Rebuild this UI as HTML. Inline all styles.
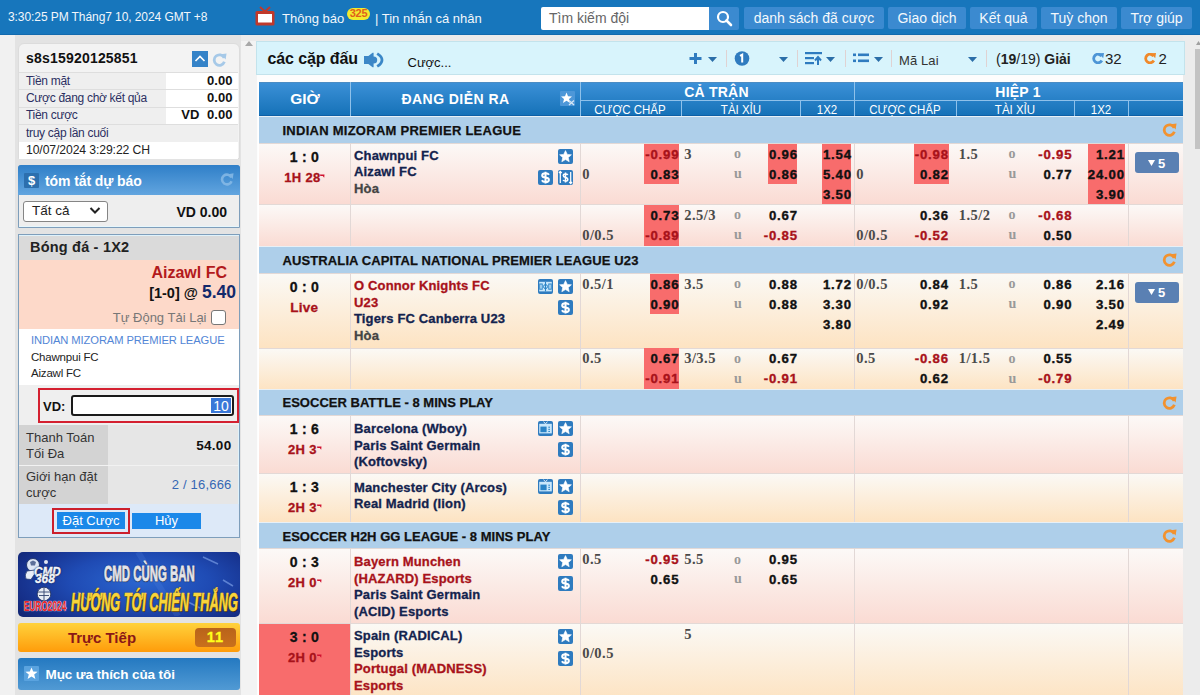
<!DOCTYPE html><html><head><meta charset="utf-8"><style>
html,body{margin:0;padding:0;width:1200px;height:695px;overflow:hidden;background:#e3e3e3;font-family:"Liberation Sans",sans-serif;}
.a{position:absolute;box-sizing:border-box;}
.t{position:absolute;white-space:nowrap;}
svg{position:absolute;}
</style></head><body>

<div class="a" style="left:0px;top:35px;width:15px;height:660px;background:#f1f1f1"></div>
<div class="a" style="left:15px;top:35px;width:226px;height:660px;background:#e3e3e3"></div>
<div class="a" style="left:241px;top:35px;width:17px;height:660px;background:#f3f3f3"></div>
<div class="a" style="left:257px;top:35px;width:936px;height:660px;background:#fdfdfd"></div>
<div class="a" style="left:241px;top:35px;width:952px;height:6px;background:#ebebeb"></div>
<div class="a" style="left:1183px;top:35px;width:17px;height:660px;background:#ececec"></div>
<div class="a" style="left:1195px;top:49px;width:5px;height:100px;background:#c3c3c3"></div>
<svg style="left:1196px;top:41px" width="5" height="4"><path d="M0 4 L2.5 0 L5 4Z" fill="#a0a0a0"/></svg>
<svg style="left:245px;top:41px" width="8" height="5"><path d="M0 5 L4 0 L8 5Z" fill="#a8a8a8"/></svg>
<div class="a" style="left:0px;top:0px;width:1200px;height:35px;background:#1776bc"></div>
<div class="a" style="left:0px;top:34px;width:1200px;height:1px;background:#126aae"></div>
<div class="t" style="top:11.14px;font-size:12px;line-height:12px;color:#f2f6fb;font-family:'Liberation Sans',sans-serif;letter-spacing:-0.08px;left:8px;">3:30:25 PM Tháng7 10, 2024 GMT +8</div>
<svg style="left:255px;top:6px" width="20" height="20" viewBox="0 0 20 20"><path d="M5 1 L10 5.5 L15 1" stroke="#c0392b" stroke-width="2" fill="none"/><rect x="0.5" y="5" width="19" height="14.5" rx="1.5" fill="#c0392b"/><rect x="3" y="8" width="14" height="8.5" fill="#fff"/></svg>
<div class="t" style="top:11.80px;font-size:13px;line-height:13px;color:#f2f6fb;font-family:'Liberation Sans',sans-serif;left:282px;">Thông báo</div>
<div class="a" style="left:347px;top:7.5px;width:23px;height:12px;background:#f2ea2e;border-radius:6px"></div>
<div class="t" style="top:8.29px;font-size:11px;line-height:11px;color:#e0601a;font-family:'Liberation Sans',sans-serif;font-weight:bold;letter-spacing:-0.3px;left:343.5px;width:30px;text-align:center;">325</div>
<div class="t" style="top:11.80px;font-size:13px;line-height:13px;color:#f2f6fb;font-family:'Liberation Sans',sans-serif;left:375px;">| Tin nhắn cá nhân</div>
<div class="a" style="left:541px;top:7px;width:168px;height:23px;background:#fff;border-radius:2px 0 0 2px"></div>
<div class="t" style="top:11.15px;font-size:14px;line-height:14px;color:#666;font-family:'Liberation Sans',sans-serif;left:549px;">Tìm kiếm đội</div>
<div class="a" style="left:709px;top:7px;width:30px;height:23px;background:#3b8ad0;border-radius:0 2px 2px 0"></div>
<svg style="left:716px;top:10px" width="17" height="17" viewBox="0 0 17 17"><circle cx="7" cy="7" r="5" stroke="#fff" stroke-width="2.2" fill="none"/><path d="M10.5 10.5 L15 15" stroke="#fff" stroke-width="2.6" stroke-linecap="round"/></svg>
<div class="a" style="left:744px;top:7px;width:140px;height:22px;background:#3b8ad0;border-radius:2px"></div>
<div class="t" style="top:11.15px;font-size:14px;line-height:14px;color:#f4f8fc;font-family:'Liberation Sans',sans-serif;left:734.0px;width:160px;text-align:center;">danh sách đã cược</div>
<div class="a" style="left:888px;top:7px;width:78px;height:22px;background:#3b8ad0;border-radius:2px"></div>
<div class="t" style="top:11.15px;font-size:14px;line-height:14px;color:#f4f8fc;font-family:'Liberation Sans',sans-serif;left:878.0px;width:98px;text-align:center;">Giao dịch</div>
<div class="a" style="left:970px;top:7px;width:67px;height:22px;background:#3b8ad0;border-radius:2px"></div>
<div class="t" style="top:11.15px;font-size:14px;line-height:14px;color:#f4f8fc;font-family:'Liberation Sans',sans-serif;left:960.0px;width:87px;text-align:center;">Kết quả</div>
<div class="a" style="left:1041px;top:7px;width:76px;height:22px;background:#3b8ad0;border-radius:2px"></div>
<div class="t" style="top:11.15px;font-size:14px;line-height:14px;color:#f4f8fc;font-family:'Liberation Sans',sans-serif;left:1031.0px;width:96px;text-align:center;">Tuỳ chọn</div>
<div class="a" style="left:1121px;top:7px;width:71px;height:22px;background:#3b8ad0;border-radius:2px"></div>
<div class="t" style="top:11.15px;font-size:14px;line-height:14px;color:#f4f8fc;font-family:'Liberation Sans',sans-serif;left:1111.0px;width:91px;text-align:center;">Trợ giúp</div>
<div class="a" style="left:18px;top:43px;width:222px;height:116px;background:#f3f3f3;border:1px solid #dcdcdc;border-radius:6px 6px 0 0"></div>
<div class="t" style="top:51.15px;font-size:14px;line-height:14px;color:#111;font-family:'Liberation Sans',sans-serif;font-weight:bold;letter-spacing:0.2px;left:26px;">s8s15920125851</div>
<div class="a" style="left:192px;top:51px;width:16px;height:16px;background:#3583c8"></div>
<svg style="left:192px;top:51px" width="16" height="16"><path d="M3.5 10 L8 5.5 L12.5 10" stroke="#fff" stroke-width="1.6" fill="none"/></svg>
<svg style="left:212px;top:52px;opacity:1" width="15" height="15" viewBox="0 0 16 16"><path d="M13 6.2 A5.6 5.6 0 1 0 13.2 10.5" stroke="#a6c9e8" stroke-width="3" fill="none"/><path d="M9.5 2.5 L15.5 1.5 L14.5 8 Z" fill="#a6c9e8"/></svg>
<div class="a" style="left:19px;top:71.5px;width:147px;height:17.5px;background:#efefef;border-top:1px solid #dedede"></div>
<div class="a" style="left:166px;top:71.5px;width:72px;height:17.5px;background:#fff;border-top:1px solid #dedede"></div>
<div class="a" style="left:19px;top:89px;width:147px;height:17.5px;background:#efefef;border-top:1px solid #dedede"></div>
<div class="a" style="left:166px;top:89px;width:72px;height:17.5px;background:#fff;border-top:1px solid #dedede"></div>
<div class="a" style="left:19px;top:106.5px;width:147px;height:17.0px;background:#efefef;border-top:1px solid #dedede"></div>
<div class="a" style="left:166px;top:106.5px;width:72px;height:17.0px;background:#fff;border-top:1px solid #dedede"></div>
<div class="a" style="left:19px;top:123.5px;width:219px;height:18px;background:#efefef;border-top:1px solid #dedede"></div>
<div class="a" style="left:19px;top:141.5px;width:219px;height:17px;background:#fff"></div>
<div class="t" style="top:75.14px;font-size:12px;line-height:12px;color:#2c2f62;font-family:'Liberation Sans',sans-serif;letter-spacing:-0.3px;left:26px;">Tiền mặt</div>
<div class="t" style="top:92.04px;font-size:12px;line-height:12px;color:#2c2f62;font-family:'Liberation Sans',sans-serif;letter-spacing:-0.3px;left:26px;">Cược đang chờ kết qủa</div>
<div class="t" style="top:109.34px;font-size:12px;line-height:12px;color:#2c2f62;font-family:'Liberation Sans',sans-serif;letter-spacing:-0.3px;left:26px;">Tiền cược</div>
<div class="t" style="top:126.54px;font-size:12px;line-height:12px;color:#2c2f62;font-family:'Liberation Sans',sans-serif;letter-spacing:-0.3px;left:26px;">truy cập lần cuối</div>
<div class="t" style="top:143.97px;font-size:12.2px;line-height:12.2px;color:#222;font-family:'Liberation Sans',sans-serif;letter-spacing:-0.1px;left:26px;">10/07/2024 3:29:22 CH</div>
<div class="t" style="top:74.20px;font-size:13px;line-height:13px;color:#111;font-family:'Liberation Sans',sans-serif;font-weight:bold;letter-spacing:0.1px;right:967.4px;text-align:right;">0.00</div>
<div class="t" style="top:91.20px;font-size:13px;line-height:13px;color:#111;font-family:'Liberation Sans',sans-serif;font-weight:bold;letter-spacing:0.1px;right:967.4px;text-align:right;">0.00</div>
<div class="t" style="top:108.40px;font-size:13px;line-height:13px;color:#111;font-family:'Liberation Sans',sans-serif;font-weight:bold;letter-spacing:0.1px;right:967.4px;text-align:right;">VD&nbsp;&nbsp;0.00</div>
<div class="a" style="left:17.5px;top:164.5px;width:222.5px;height:63.5px;background:#eeeeee;border:1px solid #7e9ebb;border-radius:3px 3px 0 0;box-shadow:inset 0 -1px 0 #e6f6fc"></div>
<div class="a" style="left:18px;top:164.5px;width:222px;height:30px;background:linear-gradient(#2f7fc8,#62a5df);border-radius:3px 3px 0 0"></div>
<div class="a" style="left:24px;top:172.5px;width:15px;height:15px;background:#2c6fae;border-radius:1px"></div>
<div class="t" style="top:174.00px;font-size:13px;line-height:13px;color:#fff;font-family:'Liberation Sans',sans-serif;font-weight:bold;left:24.0px;width:15px;text-align:center;">$</div>
<div class="t" style="top:173.65px;font-size:14px;line-height:14px;color:#fff;font-family:'Liberation Sans',sans-serif;font-weight:bold;letter-spacing:-0.1px;left:45px;">tóm tắt dự báo</div>
<svg style="left:220px;top:172px;opacity:0.8" width="14" height="14" viewBox="0 0 16 16"><path d="M13 6.2 A5.6 5.6 0 1 0 13.2 10.5" stroke="#8cbde8" stroke-width="3" fill="none"/><path d="M9.5 2.5 L15.5 1.5 L14.5 8 Z" fill="#8cbde8"/></svg>
<div class="a" style="left:23px;top:200.5px;width:85px;height:21px;background:#fff;border:1px solid #858585;border-radius:3px"></div>
<div class="t" style="top:204.07px;font-size:13.5px;line-height:13.5px;color:#222;font-family:'Liberation Sans',sans-serif;left:32px;">Tất cả</div>
<svg style="left:89px;top:206px" width="12" height="9"><path d="M1.5 2 L6 6.5 L10.5 2" stroke="#222" stroke-width="2" fill="none"/></svg>
<div class="t" style="top:205.15px;font-size:14px;line-height:14px;color:#111;font-family:'Liberation Sans',sans-serif;font-weight:bold;right:973px;text-align:right;">VD 0.00</div>
<div class="a" style="left:17.5px;top:234px;width:222.5px;height:303.5px;background:#eee;border:1px solid #7e9ebb;box-shadow:inset 1px 1px 0 #dff2fb, inset -1px -1px 0 #dff2fb"></div>
<div class="a" style="left:19px;top:235.5px;width:220px;height:24.5px;background:#dadada"></div>
<div class="t" style="top:240.23px;font-size:14.5px;line-height:14.5px;color:#222;font-family:'Liberation Sans',sans-serif;font-weight:bold;letter-spacing:0.2px;left:30px;">Bóng đá - 1X2</div>
<div class="a" style="left:19px;top:260px;width:220px;height:68.5px;background:#fdd9c9"></div>
<div class="t" style="top:265.46px;font-size:16px;line-height:16px;color:#b31a1c;font-family:'Liberation Sans',sans-serif;font-weight:bold;right:973px;text-align:right;">Aizawl FC</div>
<div class="t" style="right:964px;top:283px;font-family:'Liberation Sans',sans-serif;font-weight:bold;text-align:right;line-height:18px"><span style="font-size:14.5px;color:#111">[1-0] @ </span><span style="font-size:17.5px;color:#13296b">5.40</span></div>
<div class="t" style="top:311.00px;font-size:13px;line-height:13px;color:#777;font-family:'Liberation Sans',sans-serif;right:993.5px;text-align:right;">Tự Động Tải Lại</div>
<div class="a" style="left:211px;top:310px;width:15px;height:15px;background:#fff;border:1px solid #777;border-radius:3px"></div>
<div class="a" style="left:19px;top:328.5px;width:220px;height:56.5px;background:#fff"></div>
<div class="t" style="top:335.32px;font-size:11.2px;line-height:11.2px;color:#5286d6;font-family:'Liberation Sans',sans-serif;letter-spacing:-0.1px;left:31px;">INDIAN MIZORAM PREMIER LEAGUE</div>
<div class="t" style="top:351.77px;font-size:11.5px;line-height:11.5px;color:#222;font-family:'Liberation Sans',sans-serif;letter-spacing:-0.2px;left:31px;">Chawnpui FC</div>
<div class="t" style="top:368.27px;font-size:11.5px;line-height:11.5px;color:#222;font-family:'Liberation Sans',sans-serif;letter-spacing:-0.2px;left:31px;">Aizawl FC</div>
<div class="a" style="left:19px;top:385px;width:220px;height:40px;background:#efefef"></div>
<div class="a" style="left:37.5px;top:387.5px;width:201px;height:35px;border:2px solid #d42030"></div>
<div class="t" style="top:399.50px;font-size:13px;line-height:13px;color:#111;font-family:'Liberation Sans',sans-serif;font-weight:bold;left:43px;">VD:</div>
<div class="a" style="left:70.5px;top:395px;width:163px;height:21px;background:#fff;border:2px solid #1a1a1a;border-radius:3px"></div>
<div class="a" style="left:211px;top:398px;width:20px;height:15px;background:#3a78d8"></div>
<div class="t" style="top:399.15px;font-size:14px;line-height:14px;color:#fff;font-family:'Liberation Sans',sans-serif;left:211.0px;width:20px;text-align:center;">10</div>
<div class="a" style="left:19px;top:425px;width:89px;height:39.5px;background:#d3d3d3"></div>
<div class="a" style="left:108px;top:425px;width:130px;height:39.5px;background:#e6e6e6"></div>
<div class="a" style="left:19px;top:464.5px;width:219px;height:1.5px;background:#f2f2f2"></div>
<div class="a" style="left:19px;top:466px;width:89px;height:37.5px;background:#d3d3d3"></div>
<div class="a" style="left:108px;top:466px;width:130px;height:37.5px;background:#e6e6e6"></div>
<div class="t" style="top:431.00px;font-size:13px;line-height:13px;color:#333;font-family:'Liberation Sans',sans-serif;left:26px;">Thanh Toán</div>
<div class="t" style="top:447.00px;font-size:13px;line-height:13px;color:#333;font-family:'Liberation Sans',sans-serif;left:26px;">Tối Đa</div>
<div class="t" style="top:439.07px;font-size:13.5px;line-height:13.5px;color:#111;font-family:'Liberation Sans',sans-serif;font-weight:bold;letter-spacing:0.3px;right:968.5px;text-align:right;">54.00</div>
<div class="t" style="top:469.50px;font-size:13px;line-height:13px;color:#333;font-family:'Liberation Sans',sans-serif;left:26px;">Giới hạn đặt</div>
<div class="t" style="top:485.50px;font-size:13px;line-height:13px;color:#333;font-family:'Liberation Sans',sans-serif;left:26px;">cược</div>
<div class="t" style="top:478.00px;font-size:13px;line-height:13px;color:#3567b4;font-family:'Liberation Sans',sans-serif;letter-spacing:0.2px;right:968.5px;text-align:right;">2 / 16,666</div>
<div class="a" style="left:19px;top:503.5px;width:220px;height:33px;background:#dde9f8"></div>
<div class="a" style="left:51.5px;top:508px;width:78px;height:26px;border:2px solid #cc1f2d"></div>
<div class="a" style="left:57px;top:512px;width:68px;height:17px;background:#1b88e9"></div>
<div class="t" style="top:514.00px;font-size:13px;line-height:13px;color:#fff;font-family:'Liberation Sans',sans-serif;left:51.0px;width:80px;text-align:center;">Đặt Cược</div>
<div class="a" style="left:132px;top:512.5px;width:69px;height:16.5px;background:#1b88e9"></div>
<div class="t" style="top:514.00px;font-size:13px;line-height:13px;color:#fff;font-family:'Liberation Sans',sans-serif;left:126.5px;width:80px;text-align:center;">Hủy</div>
<div class="a" style="left:17.5px;top:552px;width:222.5px;height:64.5px;background:radial-gradient(ellipse 70% 90% at 55% 45%,#2b66d0 0%,#1f4bb4 45%,#16308a 80%,#10246e 100%);border-radius:5px;overflow:hidden"></div>
<svg style="left:17.5px;top:552px" width="222" height="64" viewBox="0 0 222 64"><path d="M120 0 L160 64" stroke="#5d8ee8" stroke-width="6" opacity=".18"/><path d="M185 5 L200 12 M170 50 L182 56 M205 28 L215 34 M60 40 L70 48" stroke="#9cc0ff" stroke-width="1.5" opacity=".5"/></svg>
<div class="t" style="left:103.5px;top:562.9px;font-size:22px;line-height:22px;font-family:'Liberation Sans',sans-serif;font-weight:bold;color:#e4e4ea;transform:scaleX(0.52);transform-origin:0 0;-webkit-text-stroke:0.8px #e4e4ea;text-shadow:0 1px 1px #223,0 0 2px #112;">CMD CÙNG BAN</div>
<div class="t" style="left:71px;top:589.3px;font-size:26px;line-height:26px;font-family:'Liberation Sans',sans-serif;font-weight:bold;color:#f8d53c;transform:scaleX(0.49);transform-origin:0 0;font-style:italic;-webkit-text-stroke:0.7px #f8d53c;text-shadow:0 0 2px #5a3a00,1px 1px 1px #3a2600;">HƯỚNG TỚI CHIẾN THẮNG</div>
<svg style="left:22px;top:556px" width="46" height="48" viewBox="0 0 46 48"><circle cx="11" cy="9" r="6.5" fill="#dfe7f5" stroke="#24386e" stroke-width="1"/><path d="M8 6 L11 4.5 L14 6 L13 9.5 L9 9.5Z" fill="#5c6f99"/><path d="M5 15 Q2 19 4 23 L9 23.5 L12 19 Q15 17 13 14Z" fill="#e9eef8" stroke="#24386e" stroke-width="0.8"/><circle cx="24" cy="6" r="2" fill="#dfe6f2"/><circle cx="22" cy="38" r="6.8" fill="#e8ecf4" stroke="#1d2d5c" stroke-width="0.8"/><path d="M16 36 H28 M17 39.5 H27 M22 31.5 V44.5" stroke="#34456f" stroke-width="0.9"/></svg>
<div class="t" style="left:34px;top:564.5px;font-size:13px;line-height:13px;font-family:'Liberation Sans',sans-serif;font-weight:bold;color:#f2f5fb;transform:scaleX(0.9);transform-origin:0 0;font-style:italic;-webkit-text-stroke:0.4px #f2f5fb;text-shadow:0 0 1px #0a1640,0 0 2px #0a1640;">CMD</div>
<div class="t" style="left:35px;top:573.4px;font-size:12.5px;line-height:12.5px;font-family:'Liberation Sans',sans-serif;font-weight:bold;color:#f2f5fb;transform:scaleX(0.95);transform-origin:0 0;font-style:italic;-webkit-text-stroke:0.4px #f2f5fb;text-shadow:0 0 1px #0a1640,0 0 2px #0a1640;">368</div>
<div class="t" style="left:23.5px;top:599.1px;font-size:14px;line-height:14px;font-family:'Liberation Sans',sans-serif;font-weight:bold;color:#e3242b;transform:scaleX(0.59);transform-origin:0 0;text-shadow:0 0 1px #fff,0 0 1.5px #fff;">EURO2024</div>
<div class="a" style="left:17.5px;top:623px;width:222.5px;height:29px;background:linear-gradient(#ffd23c,#ff9c0a);border-radius:3px"></div>
<div class="t" style="top:630.30px;font-size:15px;line-height:15px;color:#8a1717;font-family:'Liberation Sans',sans-serif;font-weight:bold;left:52.0px;width:100px;text-align:center;">Trực Tiếp</div>
<div class="a" style="left:195px;top:627.5px;width:40.5px;height:19px;background:linear-gradient(#b9631a,#c9701c);border-radius:4px"></div>
<div class="t" style="top:629.53px;font-size:14.5px;line-height:14.5px;color:#ffff1a;font-family:'Liberation Sans',sans-serif;font-weight:bold;letter-spacing:1.2px;left:195.5px;width:40px;text-align:center;-webkit-text-stroke:0.3px #ffff1a">11</div>
<div class="a" style="left:17.5px;top:658px;width:222.5px;height:31.5px;background:linear-gradient(#2479c1,#519ad4);border-radius:3px"></div>
<div class="a" style="left:24px;top:666px;width:15px;height:15px;background:#5aa3df;border-radius:1px"></div>
<svg style="left:24px;top:666px" width="15" height="15" viewBox="0 0 15 15"><path d="M7.5 1.5 L9.2 5.6 L13.6 5.8 L10.2 8.6 L11.4 12.9 L7.5 10.5 L3.6 12.9 L4.8 8.6 L1.4 5.8 L5.8 5.6Z" fill="#fff"/></svg>
<div class="t" style="top:667.57px;font-size:13.5px;line-height:13.5px;color:#fff;font-family:'Liberation Sans',sans-serif;font-weight:bold;letter-spacing:-0.1px;left:45.5px;">Mục ưa thích của tôi</div>
<div class="a" style="left:256px;top:41px;width:929px;height:34px;background:#d8f4fc;border:1px solid #c3e3ec"></div>
<div class="t" style="top:51.46px;font-size:16px;line-height:16px;color:#111;font-family:'Liberation Sans',sans-serif;font-weight:bold;letter-spacing:-0.1px;left:267.5px;">các cặp đấu</div>
<svg style="left:363px;top:52px" width="21" height="16" viewBox="0 0 21 16"><path d="M1 3.9 H5.4 L9.6 0.8 H10.6 V15.2 H9.6 L5.4 12 H1Z" fill="#3b87c7"/><circle cx="10.6" cy="8" r="3.6" fill="#3b87c7"/><path d="M14.2 1.6 Q19 4.5 19 8 Q19 11.5 14.2 14.4" stroke="#3b87c7" stroke-width="2.8" fill="none"/></svg>
<div class="t" style="top:55.50px;font-size:13px;line-height:13px;color:#111;font-family:'Liberation Sans',sans-serif;left:407.5px;">Cược...</div>
<svg style="left:688px;top:52px" width="15" height="13"><path d="M7.5 1 V12 M1.5 6.5 H13.5" stroke="#2f7bbf" stroke-width="3"/></svg>
<svg style="left:707.5px;top:56.5px" width="9" height="5"><path d="M0 0 H9 L4.5 5Z" fill="#2b6ea8"/></svg>
<div class="a" style="left:726px;top:50px;width:1.2px;height:17px;background:#e0d2d2"></div>
<svg style="left:734px;top:51px" width="16" height="15" viewBox="0 0 16 15"><circle cx="8" cy="7.5" r="7.3" fill="#2f7bbf"/><path d="M6 4.8 L8.2 3.6 V11.5" stroke="#fff" stroke-width="2" fill="none"/></svg>
<svg style="left:778.5px;top:56.5px" width="9" height="5"><path d="M0 0 H9 L4.5 5Z" fill="#2b6ea8"/></svg>
<div class="a" style="left:796.5px;top:50px;width:1.2px;height:17px;background:#e0d2d2"></div>
<svg style="left:805px;top:51px" width="18" height="15" viewBox="0 0 18 15"><rect x="0" y="1" width="17" height="2.2" fill="#2f7bbf"/><rect x="0" y="6" width="9" height="2.2" fill="#2f7bbf"/><rect x="0" y="11" width="9" height="2.2" fill="#2f7bbf"/><path d="M13 14 V6.5 M10 9.5 L13 6 L16 9.5" stroke="#2f7bbf" stroke-width="2" fill="none"/></svg>
<svg style="left:826px;top:56.5px" width="9" height="5"><path d="M0 0 H9 L4.5 5Z" fill="#2b6ea8"/></svg>
<div class="a" style="left:844.5px;top:50px;width:1.2px;height:17px;background:#e0d2d2"></div>
<svg style="left:853px;top:53px" width="16" height="11" viewBox="0 0 16 11"><rect x="0" y="0.5" width="3" height="2.6" fill="#2f7bbf"/><rect x="5" y="0.5" width="11" height="2.6" fill="#2f7bbf"/><rect x="0" y="6.5" width="3" height="2.6" fill="#2f7bbf"/><rect x="5" y="6.5" width="11" height="2.6" fill="#2f7bbf"/></svg>
<svg style="left:873.5px;top:56.5px" width="9" height="5"><path d="M0 0 H9 L4.5 5Z" fill="#2b6ea8"/></svg>
<div class="a" style="left:891px;top:50px;width:1.2px;height:17px;background:#e0d2d2"></div>
<div class="t" style="top:53.50px;font-size:13px;line-height:13px;color:#333;font-family:'Liberation Sans',sans-serif;letter-spacing:0.1px;left:899px;">Mã Lai</div>
<svg style="left:968px;top:56.5px" width="9" height="5"><path d="M0 0 H9 L4.5 5Z" fill="#2b6ea8"/></svg>
<div class="a" style="left:985.5px;top:50px;width:1.2px;height:17px;background:#e0d2d2"></div>
<div class="t" style="left:996px;top:51px;font-size:14px;line-height:16px;color:#222;font-family:'Liberation Sans',sans-serif">(<b>19</b>/19) <b>Giải</b></div>
<svg style="left:1091.5px;top:53px" width="12" height="11" viewBox="0 0 12 11"><path d="M9.6 3.2 A4.3 4.3 0 1 0 9.8 7.5" stroke="#4d95d6" stroke-width="2.8" fill="none"/><path d="M7 0.3 L12 0 L11.2 5.2Z" fill="#4d95d6"/></svg>
<div class="t" style="top:50.80px;font-size:15px;line-height:15px;color:#222;font-family:'Liberation Sans',sans-serif;left:1105px;">32</div>
<svg style="left:1143.5px;top:53px" width="12" height="11" viewBox="0 0 12 11"><path d="M9.6 3.2 A4.3 4.3 0 1 0 9.8 7.5" stroke="#f0892a" stroke-width="2.8" fill="none"/><path d="M7 0.3 L12 0 L11.2 5.2Z" fill="#f0892a"/></svg>
<div class="t" style="top:50.80px;font-size:15px;line-height:15px;color:#222;font-family:'Liberation Sans',sans-serif;left:1158.5px;">2</div>
<div class="a" style="left:258px;top:81.5px;width:925px;height:614px;background:#fff"></div>
<div class="a" style="left:259px;top:81.5px;width:923.5px;height:34.5px;background:linear-gradient(#3b90d7,#1672b8);border-top:1px solid #4a8cc4;border-bottom:1px solid #0f60a6"></div>
<div class="a" style="left:350px;top:81.5px;width:1px;height:34.5px;background:#8fc1ea"></div>
<div class="a" style="left:579.5px;top:81.5px;width:1px;height:34.5px;background:#8fc1ea"></div>
<div class="a" style="left:854px;top:81.5px;width:1px;height:34.5px;background:#8fc1ea"></div>
<div class="a" style="left:579.5px;top:99.5px;width:603px;height:1px;background:#8fc1ea"></div>
<div class="a" style="left:681px;top:99.5px;width:1px;height:16.5px;background:#8fc1ea"></div>
<div class="a" style="left:800px;top:99.5px;width:1px;height:16.5px;background:#8fc1ea"></div>
<div class="a" style="left:955.5px;top:99.5px;width:1px;height:16.5px;background:#8fc1ea"></div>
<div class="a" style="left:1074px;top:99.5px;width:1px;height:16.5px;background:#8fc1ea"></div>
<div class="a" style="left:1128px;top:99.5px;width:1px;height:16.5px;background:#8fc1ea"></div>
<div class="t" style="top:91.08px;font-size:15.5px;line-height:15.5px;color:#fff;font-family:'Liberation Sans',sans-serif;font-weight:bold;left:260.0px;width:90px;text-align:center;">GIỜ</div>
<div class="t" style="top:92.35px;font-size:14px;line-height:14px;color:#fff;font-family:'Liberation Sans',sans-serif;font-weight:bold;letter-spacing:0.45px;left:345.5px;width:220px;text-align:center;">ĐANG DIỄN RA</div>
<div class="a" style="left:560px;top:91px;width:15px;height:15px;background:#4d97d8;border-radius:1px"></div>
<svg style="left:560px;top:91px" width="15" height="15" viewBox="0 0 15 15"><path d="M6.5 1.5 L8 5.3 L12 5.5 L9 8 L10 12 L6.5 9.8 L3 12 L4 8 L1 5.5 L5 5.3Z" fill="#fff"/><path d="M9 9.5 L14 14 M14 9.5 L9 14" stroke="#d6e6f5" stroke-width="1.3"/></svg>
<div class="t" style="top:85.45px;font-size:14px;line-height:14px;color:#fff;font-family:'Liberation Sans',sans-serif;font-weight:bold;letter-spacing:0.2px;left:616.5px;width:200px;text-align:center;">CẢ TRẬN</div>
<div class="t" style="top:85.45px;font-size:14px;line-height:14px;color:#fff;font-family:'Liberation Sans',sans-serif;font-weight:bold;letter-spacing:0.2px;left:918.0px;width:200px;text-align:center;">HIỆP 1</div>
<div class="t" style="top:103.72px;font-size:12.5px;line-height:12.5px;color:#fff;font-family:'Liberation Sans',sans-serif;left:575.0px;width:110px;text-align:center;transform:scaleX(0.92)">CƯỢC CHẤP</div>
<div class="t" style="top:103.72px;font-size:12.5px;line-height:12.5px;color:#fff;font-family:'Liberation Sans',sans-serif;left:685.5px;width:110px;text-align:center;transform:scaleX(0.92)">TÀI XỈU</div>
<div class="t" style="top:103.72px;font-size:12.5px;line-height:12.5px;color:#fff;font-family:'Liberation Sans',sans-serif;left:772.0px;width:110px;text-align:center;transform:scaleX(0.92)">1X2</div>
<div class="t" style="top:103.72px;font-size:12.5px;line-height:12.5px;color:#fff;font-family:'Liberation Sans',sans-serif;left:850.0px;width:110px;text-align:center;transform:scaleX(0.92)">CƯỢC CHẤP</div>
<div class="t" style="top:103.72px;font-size:12.5px;line-height:12.5px;color:#fff;font-family:'Liberation Sans',sans-serif;left:960.0px;width:110px;text-align:center;transform:scaleX(0.92)">TÀI XỈU</div>
<div class="t" style="top:103.72px;font-size:12.5px;line-height:12.5px;color:#fff;font-family:'Liberation Sans',sans-serif;left:1046.0px;width:110px;text-align:center;transform:scaleX(0.92)">1X2</div>
<div class="a" style="left:259px;top:116px;width:923.5px;height:27px;background:#aecfea;border-top:1px solid #e8f0f6"></div>
<div class="t" style="top:124.00px;font-size:13px;line-height:13px;color:#111;font-family:'Liberation Sans',sans-serif;font-weight:bold;letter-spacing:0.26px;left:282.5px;-webkit-text-stroke:0.25px #111">INDIAN MIZORAM PREMIER LEAGUE</div>
<svg style="left:1162px;top:122.0px;opacity:1" width="15" height="15" viewBox="0 0 16 16"><path d="M13 6.2 A5.6 5.6 0 1 0 13.2 10.5" stroke="#f2922f" stroke-width="3" fill="none"/><path d="M9.5 2.5 L15.5 1.5 L14.5 8 Z" fill="#f2922f"/></svg>
<div class="a" style="left:259px;top:143px;width:923.5px;height:61px;background:linear-gradient(#fcf9f7,#fadbd3);border-top:1px solid #e3d9d6"></div>
<div class="a" style="left:350px;top:143px;width:1px;height:61px;background:#e2d8d6"></div>
<div class="a" style="left:579.5px;top:143px;width:1px;height:61px;background:#e2d8d6"></div>
<div class="a" style="left:854px;top:143px;width:1px;height:61px;background:#e2d8d6"></div>
<div class="a" style="left:1127.5px;top:143px;width:1px;height:61px;background:#e2d8d6"></div>
<div class="a" style="left:259px;top:204px;width:923.5px;height:42px;background:linear-gradient(#fcf9f7,#fadbd3);border-top:1px solid #e3d9d6"></div>
<div class="a" style="left:350px;top:204px;width:1px;height:42px;background:#e2d8d6"></div>
<div class="a" style="left:579.5px;top:204px;width:1px;height:42px;background:#e2d8d6"></div>
<div class="a" style="left:854px;top:204px;width:1px;height:42px;background:#e2d8d6"></div>
<div class="a" style="left:1127.5px;top:204px;width:1px;height:42px;background:#e2d8d6"></div>
<div class="t" style="top:150.15px;font-size:14px;line-height:14px;color:#111;font-family:'Liberation Sans',sans-serif;font-weight:bold;letter-spacing:0.3px;left:259.45px;width:90px;text-align:center;-webkit-text-stroke:0.3px #111">1 : 0</div>
<div class="t" style="top:171.30px;font-size:13px;line-height:13px;color:#a8121a;font-family:'Liberation Sans',sans-serif;font-weight:bold;letter-spacing:0.3px;left:257.45px;width:90px;text-align:center;-webkit-text-stroke:0.3px #a8121a">1H 28</div>
<svg style="left:320.4px;top:173.5px" width="5" height="4"><path d="M0 0.5 H4.5 L4.2 3.8 L2.8 2 H0.3Z" fill="#d0102e"/></svg>
<div class="t" style="top:149.00px;font-size:13px;line-height:13px;color:#13234e;font-family:'Liberation Sans',sans-serif;font-weight:bold;letter-spacing:0.15px;left:354px;-webkit-text-stroke:0.3px #13234e">Chawnpui FC</div>
<div class="t" style="top:165.30px;font-size:13px;line-height:13px;color:#13234e;font-family:'Liberation Sans',sans-serif;font-weight:bold;letter-spacing:0.15px;left:354px;-webkit-text-stroke:0.3px #13234e">Aizawl FC</div>
<div class="t" style="top:181.50px;font-size:13px;line-height:13px;color:#444;font-family:'Liberation Sans',sans-serif;font-weight:bold;letter-spacing:0.15px;left:354px;-webkit-text-stroke:0.3px #444">Hòa</div>
<svg style="left:557.5px;top:149px" width="15" height="15" viewBox="0 0 15 15"><rect width="15" height="15" rx="2" fill="#2e7bbf"/><path d="M7.5 1.6 L9.3 5.4 L13.4 5.8 L10.3 8.6 L11.2 12.7 L7.5 10.6 L3.8 12.7 L4.7 8.6 L1.6 5.8 L5.7 5.4Z" fill="#fff" stroke="#fff" stroke-width="0.6" stroke-linejoin="round"/></svg>
<svg style="left:538px;top:170px" width="15" height="15" viewBox="0 0 15 15"><rect width="15" height="15" rx="2" fill="#2e7bbf"/><path d="M11 4.8 Q10 3.3 7.5 3.3 Q4.2 3.3 4.2 5.5 Q4.2 7.3 7.5 7.6 Q10.9 8 10.9 9.9 Q10.9 12 7.5 12 Q4.8 12 3.9 10.3 M7.5 1.8 V13.4" stroke="#fff" stroke-width="2" fill="none"/></svg>
<svg style="left:557.5px;top:170px" width="15" height="15" viewBox="0 0 15 15"><rect width="15" height="15" rx="2" fill="#2e7bbf"/><path d="M9.8 5 Q9.2 3.9 7.5 3.9 Q5.3 3.9 5.3 5.6 Q5.3 7 7.5 7.4 Q9.8 7.8 9.8 9.5 Q9.8 11.1 7.5 11.1 Q5.7 11.1 5.1 10 M7.5 2.6 V12.4" stroke="#fff" stroke-width="1.5" fill="none"/><path d="M2.3 1.5 V13 M0.9 3 L2.3 1.5 L3.7 3 M12.7 2 V13.5 M11.3 12 L12.7 13.5 L14.1 12" stroke="#fff" stroke-width="1.2" fill="none"/></svg>
<div class="a" style="left:644px;top:144px;width:35px;height:40px;background:#f86c6c"></div>
<div class="a" style="left:768px;top:144px;width:29px;height:40px;background:#f86c6c"></div>
<div class="a" style="left:822px;top:144px;width:29px;height:59.5px;background:#f86c6c"></div>
<div class="t" style="top:166.66px;font-size:14.5px;line-height:14.5px;color:#4a4a4a;font-family:'Liberation Serif',serif;font-weight:bold;letter-spacing:0.45px;left:582.2px;">0</div>
<div class="t" style="top:147.83px;font-size:13.2px;line-height:13.2px;color:#a8121a;font-family:'Liberation Sans',sans-serif;font-weight:bold;letter-spacing:0.8px;right:520.7px;text-align:right;-webkit-text-stroke:0.35px #a8121a">-0.99</div>
<div class="t" style="top:167.83px;font-size:13.2px;line-height:13.2px;color:#111;font-family:'Liberation Sans',sans-serif;font-weight:bold;letter-spacing:0.8px;right:520.7px;text-align:right;-webkit-text-stroke:0.35px #111">0.83</div>
<div class="t" style="top:146.66px;font-size:14.5px;line-height:14.5px;color:#4a4a4a;font-family:'Liberation Serif',serif;font-weight:bold;letter-spacing:0.45px;left:684.2px;">3</div>
<div class="t" style="top:147.28px;font-size:14px;line-height:14px;color:#999;font-family:'Liberation Serif',serif;font-weight:bold;left:734px;">o</div>
<div class="t" style="top:167.28px;font-size:14px;line-height:14px;color:#999;font-family:'Liberation Serif',serif;font-weight:bold;left:734px;">u</div>
<div class="t" style="top:147.83px;font-size:13.2px;line-height:13.2px;color:#111;font-family:'Liberation Sans',sans-serif;font-weight:bold;letter-spacing:0.8px;right:402.20000000000005px;text-align:right;-webkit-text-stroke:0.35px #111">0.96</div>
<div class="t" style="top:167.83px;font-size:13.2px;line-height:13.2px;color:#111;font-family:'Liberation Sans',sans-serif;font-weight:bold;letter-spacing:0.8px;right:402.20000000000005px;text-align:right;-webkit-text-stroke:0.35px #111">0.86</div>
<div class="t" style="top:147.83px;font-size:13.2px;line-height:13.2px;color:#111;font-family:'Liberation Sans',sans-serif;font-weight:bold;letter-spacing:0.8px;right:348.20000000000005px;text-align:right;-webkit-text-stroke:0.35px #111">1.54</div>
<div class="t" style="top:167.83px;font-size:13.2px;line-height:13.2px;color:#111;font-family:'Liberation Sans',sans-serif;font-weight:bold;letter-spacing:0.8px;right:348.20000000000005px;text-align:right;-webkit-text-stroke:0.35px #111">5.40</div>
<div class="t" style="top:187.83px;font-size:13.2px;line-height:13.2px;color:#111;font-family:'Liberation Sans',sans-serif;font-weight:bold;letter-spacing:0.8px;right:348.20000000000005px;text-align:right;-webkit-text-stroke:0.35px #111">3.50</div>
<div class="a" style="left:913.5px;top:144px;width:35.0px;height:40px;background:#f86c6c"></div>
<div class="a" style="left:1088px;top:144px;width:36.5px;height:59.5px;background:#f86c6c"></div>
<div class="t" style="top:166.66px;font-size:14.5px;line-height:14.5px;color:#4a4a4a;font-family:'Liberation Serif',serif;font-weight:bold;letter-spacing:0.45px;left:856.2px;">0</div>
<div class="t" style="top:147.83px;font-size:13.2px;line-height:13.2px;color:#a8121a;font-family:'Liberation Sans',sans-serif;font-weight:bold;letter-spacing:0.8px;right:251.20000000000005px;text-align:right;-webkit-text-stroke:0.35px #a8121a">-0.98</div>
<div class="t" style="top:167.83px;font-size:13.2px;line-height:13.2px;color:#111;font-family:'Liberation Sans',sans-serif;font-weight:bold;letter-spacing:0.8px;right:251.20000000000005px;text-align:right;-webkit-text-stroke:0.35px #111">0.82</div>
<div class="t" style="top:146.66px;font-size:14.5px;line-height:14.5px;color:#4a4a4a;font-family:'Liberation Serif',serif;font-weight:bold;letter-spacing:0.45px;left:958.7px;">1.5</div>
<div class="t" style="top:147.28px;font-size:14px;line-height:14px;color:#999;font-family:'Liberation Serif',serif;font-weight:bold;left:1008.5px;">o</div>
<div class="t" style="top:167.28px;font-size:14px;line-height:14px;color:#999;font-family:'Liberation Serif',serif;font-weight:bold;left:1008.5px;">u</div>
<div class="t" style="top:147.83px;font-size:13.2px;line-height:13.2px;color:#a8121a;font-family:'Liberation Sans',sans-serif;font-weight:bold;letter-spacing:0.8px;right:127.70000000000005px;text-align:right;-webkit-text-stroke:0.35px #a8121a">-0.95</div>
<div class="t" style="top:167.83px;font-size:13.2px;line-height:13.2px;color:#111;font-family:'Liberation Sans',sans-serif;font-weight:bold;letter-spacing:0.8px;right:127.70000000000005px;text-align:right;-webkit-text-stroke:0.35px #111">0.77</div>
<div class="t" style="top:147.83px;font-size:13.2px;line-height:13.2px;color:#111;font-family:'Liberation Sans',sans-serif;font-weight:bold;letter-spacing:0.8px;right:75.20000000000005px;text-align:right;-webkit-text-stroke:0.35px #111">1.21</div>
<div class="t" style="top:167.83px;font-size:13.2px;line-height:13.2px;color:#111;font-family:'Liberation Sans',sans-serif;font-weight:bold;letter-spacing:0.8px;right:75.20000000000005px;text-align:right;-webkit-text-stroke:0.35px #111">24.00</div>
<div class="t" style="top:187.83px;font-size:13.2px;line-height:13.2px;color:#111;font-family:'Liberation Sans',sans-serif;font-weight:bold;letter-spacing:0.8px;right:75.20000000000005px;text-align:right;-webkit-text-stroke:0.35px #111">3.90</div>
<div class="a" style="left:1134.5px;top:152px;width:44px;height:21px;background:#5a80b3;border-radius:3px"></div>
<svg style="left:1147.5px;top:159.5px" width="7" height="6"><path d="M0 0 H7 L3.5 6Z" fill="#fff"/></svg>
<div class="t" style="top:156.50px;font-size:13px;line-height:13px;color:#fff;font-family:'Liberation Sans',sans-serif;font-weight:bold;left:1158px;">5</div>
<div class="a" style="left:644px;top:205px;width:35px;height:40.5px;background:#f86c6c"></div>
<div class="t" style="top:227.66px;font-size:14.5px;line-height:14.5px;color:#4a4a4a;font-family:'Liberation Serif',serif;font-weight:bold;letter-spacing:0.45px;left:582.2px;">0/0.5</div>
<div class="t" style="top:208.83px;font-size:13.2px;line-height:13.2px;color:#111;font-family:'Liberation Sans',sans-serif;font-weight:bold;letter-spacing:0.8px;right:520.7px;text-align:right;-webkit-text-stroke:0.35px #111">0.73</div>
<div class="t" style="top:228.83px;font-size:13.2px;line-height:13.2px;color:#a8121a;font-family:'Liberation Sans',sans-serif;font-weight:bold;letter-spacing:0.8px;right:520.7px;text-align:right;-webkit-text-stroke:0.35px #a8121a">-0.89</div>
<div class="t" style="top:207.66px;font-size:14.5px;line-height:14.5px;color:#4a4a4a;font-family:'Liberation Serif',serif;font-weight:bold;letter-spacing:0.45px;left:684.2px;">2.5/3</div>
<div class="t" style="top:208.28px;font-size:14px;line-height:14px;color:#999;font-family:'Liberation Serif',serif;font-weight:bold;left:734px;">o</div>
<div class="t" style="top:228.28px;font-size:14px;line-height:14px;color:#999;font-family:'Liberation Serif',serif;font-weight:bold;left:734px;">u</div>
<div class="t" style="top:208.83px;font-size:13.2px;line-height:13.2px;color:#111;font-family:'Liberation Sans',sans-serif;font-weight:bold;letter-spacing:0.8px;right:402.20000000000005px;text-align:right;-webkit-text-stroke:0.35px #111">0.67</div>
<div class="t" style="top:228.83px;font-size:13.2px;line-height:13.2px;color:#a8121a;font-family:'Liberation Sans',sans-serif;font-weight:bold;letter-spacing:0.8px;right:402.20000000000005px;text-align:right;-webkit-text-stroke:0.35px #a8121a">-0.85</div>
<div class="t" style="top:227.66px;font-size:14.5px;line-height:14.5px;color:#4a4a4a;font-family:'Liberation Serif',serif;font-weight:bold;letter-spacing:0.45px;left:856.2px;">0/0.5</div>
<div class="t" style="top:208.83px;font-size:13.2px;line-height:13.2px;color:#111;font-family:'Liberation Sans',sans-serif;font-weight:bold;letter-spacing:0.8px;right:251.20000000000005px;text-align:right;-webkit-text-stroke:0.35px #111">0.36</div>
<div class="t" style="top:228.83px;font-size:13.2px;line-height:13.2px;color:#a8121a;font-family:'Liberation Sans',sans-serif;font-weight:bold;letter-spacing:0.8px;right:251.20000000000005px;text-align:right;-webkit-text-stroke:0.35px #a8121a">-0.52</div>
<div class="t" style="top:207.66px;font-size:14.5px;line-height:14.5px;color:#4a4a4a;font-family:'Liberation Serif',serif;font-weight:bold;letter-spacing:0.45px;left:958.7px;">1.5/2</div>
<div class="t" style="top:208.28px;font-size:14px;line-height:14px;color:#999;font-family:'Liberation Serif',serif;font-weight:bold;left:1008.5px;">o</div>
<div class="t" style="top:228.28px;font-size:14px;line-height:14px;color:#999;font-family:'Liberation Serif',serif;font-weight:bold;left:1008.5px;">u</div>
<div class="t" style="top:208.83px;font-size:13.2px;line-height:13.2px;color:#a8121a;font-family:'Liberation Sans',sans-serif;font-weight:bold;letter-spacing:0.8px;right:127.70000000000005px;text-align:right;-webkit-text-stroke:0.35px #a8121a">-0.68</div>
<div class="t" style="top:228.83px;font-size:13.2px;line-height:13.2px;color:#111;font-family:'Liberation Sans',sans-serif;font-weight:bold;letter-spacing:0.8px;right:127.70000000000005px;text-align:right;-webkit-text-stroke:0.35px #111">0.50</div>
<div class="a" style="left:259px;top:246px;width:923.5px;height:27px;background:#aecfea;border-top:1px solid #e8f0f6"></div>
<div class="t" style="top:254.00px;font-size:13px;line-height:13px;color:#111;font-family:'Liberation Sans',sans-serif;font-weight:bold;letter-spacing:0.11px;left:282.5px;-webkit-text-stroke:0.25px #111">AUSTRALIA CAPITAL NATIONAL PREMIER LEAGUE U23</div>
<svg style="left:1162px;top:252.0px;opacity:1" width="15" height="15" viewBox="0 0 16 16"><path d="M13 6.2 A5.6 5.6 0 1 0 13.2 10.5" stroke="#f2922f" stroke-width="3" fill="none"/><path d="M9.5 2.5 L15.5 1.5 L14.5 8 Z" fill="#f2922f"/></svg>
<div class="a" style="left:259px;top:273px;width:923.5px;height:74.5px;background:linear-gradient(#fbf9f5,#fde3c2);border-top:1px solid #e3d9d6"></div>
<div class="a" style="left:350px;top:273px;width:1px;height:74.5px;background:#e2d8d6"></div>
<div class="a" style="left:579.5px;top:273px;width:1px;height:74.5px;background:#e2d8d6"></div>
<div class="a" style="left:854px;top:273px;width:1px;height:74.5px;background:#e2d8d6"></div>
<div class="a" style="left:1127.5px;top:273px;width:1px;height:74.5px;background:#e2d8d6"></div>
<div class="a" style="left:259px;top:347.5px;width:923.5px;height:42.0px;background:linear-gradient(#fbf9f5,#fde3c2);border-top:1px solid #e3d9d6"></div>
<div class="a" style="left:350px;top:347.5px;width:1px;height:42.0px;background:#e2d8d6"></div>
<div class="a" style="left:579.5px;top:347.5px;width:1px;height:42.0px;background:#e2d8d6"></div>
<div class="a" style="left:854px;top:347.5px;width:1px;height:42.0px;background:#e2d8d6"></div>
<div class="a" style="left:1127.5px;top:347.5px;width:1px;height:42.0px;background:#e2d8d6"></div>
<div class="t" style="top:280.15px;font-size:14px;line-height:14px;color:#111;font-family:'Liberation Sans',sans-serif;font-weight:bold;letter-spacing:0.3px;left:259.45px;width:90px;text-align:center;-webkit-text-stroke:0.3px #111">0 : 0</div>
<div class="t" style="top:300.87px;font-size:13.5px;line-height:13.5px;color:#a8121a;font-family:'Liberation Sans',sans-serif;font-weight:bold;letter-spacing:0.3px;left:259.3px;width:90px;text-align:center;-webkit-text-stroke:0.3px #a8121a">Live</div>
<div class="t" style="top:279.30px;font-size:13px;line-height:13px;color:#a8121a;font-family:'Liberation Sans',sans-serif;font-weight:bold;letter-spacing:0.15px;left:354px;-webkit-text-stroke:0.3px #a8121a">O Connor Knights FC</div>
<div class="t" style="top:295.80px;font-size:13px;line-height:13px;color:#a8121a;font-family:'Liberation Sans',sans-serif;font-weight:bold;letter-spacing:0.15px;left:354px;-webkit-text-stroke:0.3px #a8121a">U23</div>
<div class="t" style="top:312.30px;font-size:13px;line-height:13px;color:#13234e;font-family:'Liberation Sans',sans-serif;font-weight:bold;letter-spacing:0.15px;left:354px;-webkit-text-stroke:0.3px #13234e">Tigers FC Canberra U23</div>
<div class="t" style="top:328.80px;font-size:13px;line-height:13px;color:#444;font-family:'Liberation Sans',sans-serif;font-weight:bold;letter-spacing:0.15px;left:354px;-webkit-text-stroke:0.3px #444">Hòa</div>
<svg style="left:538px;top:278.5px" width="15" height="15" viewBox="0 0 15 15"><rect width="15" height="15" rx="2" fill="#2e7bbf"/><rect x="1.2" y="2.8" width="12.6" height="9.6" fill="#c9e7fb"/><path d="M7.5 2.8 V12.4" stroke="#2a83c6" stroke-width="1.1"/><circle cx="7.5" cy="7.6" r="2" fill="none" stroke="#2a83c6" stroke-width="1"/><rect x="1.8" y="5" width="2.4" height="5.2" fill="none" stroke="#2a83c6" stroke-width="1"/><rect x="10.8" y="5" width="2.4" height="5.2" fill="none" stroke="#2a83c6" stroke-width="1"/></svg>
<svg style="left:557.5px;top:278.5px" width="15" height="15" viewBox="0 0 15 15"><rect width="15" height="15" rx="2" fill="#2e7bbf"/><path d="M7.5 1.6 L9.3 5.4 L13.4 5.8 L10.3 8.6 L11.2 12.7 L7.5 10.6 L3.8 12.7 L4.7 8.6 L1.6 5.8 L5.7 5.4Z" fill="#fff" stroke="#fff" stroke-width="0.6" stroke-linejoin="round"/></svg>
<svg style="left:557.5px;top:299.5px" width="15" height="15" viewBox="0 0 15 15"><rect width="15" height="15" rx="2" fill="#2e7bbf"/><path d="M11 4.8 Q10 3.3 7.5 3.3 Q4.2 3.3 4.2 5.5 Q4.2 7.3 7.5 7.6 Q10.9 8 10.9 9.9 Q10.9 12 7.5 12 Q4.8 12 3.9 10.3 M7.5 1.8 V13.4" stroke="#fff" stroke-width="2" fill="none"/></svg>
<div class="a" style="left:649.5px;top:274px;width:29.5px;height:39.5px;background:#f86c6c"></div>
<div class="t" style="top:276.66px;font-size:14.5px;line-height:14.5px;color:#4a4a4a;font-family:'Liberation Serif',serif;font-weight:bold;letter-spacing:0.45px;left:582.2px;">0.5/1</div>
<div class="t" style="top:277.83px;font-size:13.2px;line-height:13.2px;color:#111;font-family:'Liberation Sans',sans-serif;font-weight:bold;letter-spacing:0.8px;right:520.7px;text-align:right;-webkit-text-stroke:0.35px #111">0.86</div>
<div class="t" style="top:297.83px;font-size:13.2px;line-height:13.2px;color:#111;font-family:'Liberation Sans',sans-serif;font-weight:bold;letter-spacing:0.8px;right:520.7px;text-align:right;-webkit-text-stroke:0.35px #111">0.90</div>
<div class="t" style="top:276.66px;font-size:14.5px;line-height:14.5px;color:#4a4a4a;font-family:'Liberation Serif',serif;font-weight:bold;letter-spacing:0.45px;left:684.2px;">3.5</div>
<div class="t" style="top:277.27px;font-size:14px;line-height:14px;color:#999;font-family:'Liberation Serif',serif;font-weight:bold;left:734px;">o</div>
<div class="t" style="top:297.27px;font-size:14px;line-height:14px;color:#999;font-family:'Liberation Serif',serif;font-weight:bold;left:734px;">u</div>
<div class="t" style="top:277.83px;font-size:13.2px;line-height:13.2px;color:#111;font-family:'Liberation Sans',sans-serif;font-weight:bold;letter-spacing:0.8px;right:402.20000000000005px;text-align:right;-webkit-text-stroke:0.35px #111">0.88</div>
<div class="t" style="top:297.83px;font-size:13.2px;line-height:13.2px;color:#111;font-family:'Liberation Sans',sans-serif;font-weight:bold;letter-spacing:0.8px;right:402.20000000000005px;text-align:right;-webkit-text-stroke:0.35px #111">0.88</div>
<div class="t" style="top:277.83px;font-size:13.2px;line-height:13.2px;color:#111;font-family:'Liberation Sans',sans-serif;font-weight:bold;letter-spacing:0.8px;right:348.20000000000005px;text-align:right;-webkit-text-stroke:0.35px #111">1.72</div>
<div class="t" style="top:297.83px;font-size:13.2px;line-height:13.2px;color:#111;font-family:'Liberation Sans',sans-serif;font-weight:bold;letter-spacing:0.8px;right:348.20000000000005px;text-align:right;-webkit-text-stroke:0.35px #111">3.30</div>
<div class="t" style="top:317.83px;font-size:13.2px;line-height:13.2px;color:#111;font-family:'Liberation Sans',sans-serif;font-weight:bold;letter-spacing:0.8px;right:348.20000000000005px;text-align:right;-webkit-text-stroke:0.35px #111">3.80</div>
<div class="t" style="top:276.66px;font-size:14.5px;line-height:14.5px;color:#4a4a4a;font-family:'Liberation Serif',serif;font-weight:bold;letter-spacing:0.45px;left:856.2px;">0/0.5</div>
<div class="t" style="top:277.83px;font-size:13.2px;line-height:13.2px;color:#111;font-family:'Liberation Sans',sans-serif;font-weight:bold;letter-spacing:0.8px;right:251.20000000000005px;text-align:right;-webkit-text-stroke:0.35px #111">0.84</div>
<div class="t" style="top:297.83px;font-size:13.2px;line-height:13.2px;color:#111;font-family:'Liberation Sans',sans-serif;font-weight:bold;letter-spacing:0.8px;right:251.20000000000005px;text-align:right;-webkit-text-stroke:0.35px #111">0.92</div>
<div class="t" style="top:276.66px;font-size:14.5px;line-height:14.5px;color:#4a4a4a;font-family:'Liberation Serif',serif;font-weight:bold;letter-spacing:0.45px;left:958.7px;">1.5</div>
<div class="t" style="top:277.27px;font-size:14px;line-height:14px;color:#999;font-family:'Liberation Serif',serif;font-weight:bold;left:1008.5px;">o</div>
<div class="t" style="top:297.27px;font-size:14px;line-height:14px;color:#999;font-family:'Liberation Serif',serif;font-weight:bold;left:1008.5px;">u</div>
<div class="t" style="top:277.83px;font-size:13.2px;line-height:13.2px;color:#111;font-family:'Liberation Sans',sans-serif;font-weight:bold;letter-spacing:0.8px;right:127.70000000000005px;text-align:right;-webkit-text-stroke:0.35px #111">0.86</div>
<div class="t" style="top:297.83px;font-size:13.2px;line-height:13.2px;color:#111;font-family:'Liberation Sans',sans-serif;font-weight:bold;letter-spacing:0.8px;right:127.70000000000005px;text-align:right;-webkit-text-stroke:0.35px #111">0.90</div>
<div class="t" style="top:277.83px;font-size:13.2px;line-height:13.2px;color:#111;font-family:'Liberation Sans',sans-serif;font-weight:bold;letter-spacing:0.8px;right:75.20000000000005px;text-align:right;-webkit-text-stroke:0.35px #111">2.16</div>
<div class="t" style="top:297.83px;font-size:13.2px;line-height:13.2px;color:#111;font-family:'Liberation Sans',sans-serif;font-weight:bold;letter-spacing:0.8px;right:75.20000000000005px;text-align:right;-webkit-text-stroke:0.35px #111">3.50</div>
<div class="t" style="top:317.83px;font-size:13.2px;line-height:13.2px;color:#111;font-family:'Liberation Sans',sans-serif;font-weight:bold;letter-spacing:0.8px;right:75.20000000000005px;text-align:right;-webkit-text-stroke:0.35px #111">2.49</div>
<div class="a" style="left:1134.5px;top:281.5px;width:44px;height:21px;background:#5a80b3;border-radius:3px"></div>
<svg style="left:1147.5px;top:289.0px" width="7" height="6"><path d="M0 0 H7 L3.5 6Z" fill="#fff"/></svg>
<div class="t" style="top:286.00px;font-size:13px;line-height:13px;color:#fff;font-family:'Liberation Sans',sans-serif;font-weight:bold;left:1158px;">5</div>
<div class="a" style="left:644px;top:348px;width:35px;height:40.5px;background:#f86c6c"></div>
<div class="t" style="top:351.16px;font-size:14.5px;line-height:14.5px;color:#4a4a4a;font-family:'Liberation Serif',serif;font-weight:bold;letter-spacing:0.45px;left:582.2px;">0.5</div>
<div class="t" style="top:352.33px;font-size:13.2px;line-height:13.2px;color:#111;font-family:'Liberation Sans',sans-serif;font-weight:bold;letter-spacing:0.8px;right:520.7px;text-align:right;-webkit-text-stroke:0.35px #111">0.67</div>
<div class="t" style="top:372.33px;font-size:13.2px;line-height:13.2px;color:#a8121a;font-family:'Liberation Sans',sans-serif;font-weight:bold;letter-spacing:0.8px;right:520.7px;text-align:right;-webkit-text-stroke:0.35px #a8121a">-0.91</div>
<div class="t" style="top:351.16px;font-size:14.5px;line-height:14.5px;color:#4a4a4a;font-family:'Liberation Serif',serif;font-weight:bold;letter-spacing:0.45px;left:684.2px;">3/3.5</div>
<div class="t" style="top:351.77px;font-size:14px;line-height:14px;color:#999;font-family:'Liberation Serif',serif;font-weight:bold;left:734px;">o</div>
<div class="t" style="top:371.77px;font-size:14px;line-height:14px;color:#999;font-family:'Liberation Serif',serif;font-weight:bold;left:734px;">u</div>
<div class="t" style="top:352.33px;font-size:13.2px;line-height:13.2px;color:#111;font-family:'Liberation Sans',sans-serif;font-weight:bold;letter-spacing:0.8px;right:402.20000000000005px;text-align:right;-webkit-text-stroke:0.35px #111">0.67</div>
<div class="t" style="top:372.33px;font-size:13.2px;line-height:13.2px;color:#a8121a;font-family:'Liberation Sans',sans-serif;font-weight:bold;letter-spacing:0.8px;right:402.20000000000005px;text-align:right;-webkit-text-stroke:0.35px #a8121a">-0.91</div>
<div class="t" style="top:351.16px;font-size:14.5px;line-height:14.5px;color:#4a4a4a;font-family:'Liberation Serif',serif;font-weight:bold;letter-spacing:0.45px;left:856.2px;">0.5</div>
<div class="t" style="top:352.33px;font-size:13.2px;line-height:13.2px;color:#a8121a;font-family:'Liberation Sans',sans-serif;font-weight:bold;letter-spacing:0.8px;right:251.20000000000005px;text-align:right;-webkit-text-stroke:0.35px #a8121a">-0.86</div>
<div class="t" style="top:372.33px;font-size:13.2px;line-height:13.2px;color:#111;font-family:'Liberation Sans',sans-serif;font-weight:bold;letter-spacing:0.8px;right:251.20000000000005px;text-align:right;-webkit-text-stroke:0.35px #111">0.62</div>
<div class="t" style="top:351.16px;font-size:14.5px;line-height:14.5px;color:#4a4a4a;font-family:'Liberation Serif',serif;font-weight:bold;letter-spacing:0.45px;left:958.7px;">1/1.5</div>
<div class="t" style="top:351.77px;font-size:14px;line-height:14px;color:#999;font-family:'Liberation Serif',serif;font-weight:bold;left:1008.5px;">o</div>
<div class="t" style="top:371.77px;font-size:14px;line-height:14px;color:#999;font-family:'Liberation Serif',serif;font-weight:bold;left:1008.5px;">u</div>
<div class="t" style="top:352.33px;font-size:13.2px;line-height:13.2px;color:#111;font-family:'Liberation Sans',sans-serif;font-weight:bold;letter-spacing:0.8px;right:127.70000000000005px;text-align:right;-webkit-text-stroke:0.35px #111">0.55</div>
<div class="t" style="top:372.33px;font-size:13.2px;line-height:13.2px;color:#a8121a;font-family:'Liberation Sans',sans-serif;font-weight:bold;letter-spacing:0.8px;right:127.70000000000005px;text-align:right;-webkit-text-stroke:0.35px #a8121a">-0.79</div>
<div class="a" style="left:259px;top:389px;width:923.5px;height:26px;background:#aecfea;border-top:1px solid #e8f0f6"></div>
<div class="t" style="top:396.00px;font-size:13px;line-height:13px;color:#111;font-family:'Liberation Sans',sans-serif;font-weight:bold;letter-spacing:0.009999999999999995px;left:282.5px;-webkit-text-stroke:0.25px #111">ESOCCER BATTLE - 8 MINS PLAY</div>
<svg style="left:1162px;top:394.5px;opacity:1" width="15" height="15" viewBox="0 0 16 16"><path d="M13 6.2 A5.6 5.6 0 1 0 13.2 10.5" stroke="#f2922f" stroke-width="3" fill="none"/><path d="M9.5 2.5 L15.5 1.5 L14.5 8 Z" fill="#f2922f"/></svg>
<div class="a" style="left:259px;top:415px;width:923.5px;height:58px;background:linear-gradient(#fcf9f7,#fadbd3);border-top:1px solid #e3d9d6"></div>
<div class="a" style="left:350px;top:415px;width:1px;height:58px;background:#e2d8d6"></div>
<div class="a" style="left:579.5px;top:415px;width:1px;height:58px;background:#e2d8d6"></div>
<div class="a" style="left:854px;top:415px;width:1px;height:58px;background:#e2d8d6"></div>
<div class="a" style="left:1127.5px;top:415px;width:1px;height:58px;background:#e2d8d6"></div>
<div class="a" style="left:259px;top:473px;width:923.5px;height:49px;background:linear-gradient(#fbf9f5,#fde3c2);border-top:1px solid #e3d9d6"></div>
<div class="a" style="left:350px;top:473px;width:1px;height:49px;background:#e2d8d6"></div>
<div class="a" style="left:579.5px;top:473px;width:1px;height:49px;background:#e2d8d6"></div>
<div class="a" style="left:854px;top:473px;width:1px;height:49px;background:#e2d8d6"></div>
<div class="a" style="left:1127.5px;top:473px;width:1px;height:49px;background:#e2d8d6"></div>
<div class="t" style="top:422.15px;font-size:14px;line-height:14px;color:#111;font-family:'Liberation Sans',sans-serif;font-weight:bold;letter-spacing:0.3px;left:259.45px;width:90px;text-align:center;-webkit-text-stroke:0.3px #111">1 : 6</div>
<div class="t" style="top:443.30px;font-size:13px;line-height:13px;color:#a8121a;font-family:'Liberation Sans',sans-serif;font-weight:bold;letter-spacing:0.3px;left:257.45px;width:90px;text-align:center;-webkit-text-stroke:0.3px #a8121a">2H 3</div>
<svg style="left:316.6px;top:445.5px" width="5" height="4"><path d="M0 0.5 H4.5 L4.2 3.8 L2.8 2 H0.3Z" fill="#d0102e"/></svg>
<div class="t" style="top:422.30px;font-size:13px;line-height:13px;color:#13234e;font-family:'Liberation Sans',sans-serif;font-weight:bold;letter-spacing:0.15px;left:354px;-webkit-text-stroke:0.3px #13234e">Barcelona (Wboy)</div>
<div class="t" style="top:438.80px;font-size:13px;line-height:13px;color:#13234e;font-family:'Liberation Sans',sans-serif;font-weight:bold;letter-spacing:0.15px;left:354px;-webkit-text-stroke:0.3px #13234e">Paris Saint Germain</div>
<div class="t" style="top:455.30px;font-size:13px;line-height:13px;color:#13234e;font-family:'Liberation Sans',sans-serif;font-weight:bold;letter-spacing:0.15px;left:354px;-webkit-text-stroke:0.3px #13234e">(Koftovsky)</div>
<svg style="left:538px;top:421px" width="15" height="15" viewBox="0 0 15 15"><rect width="15" height="15" rx="2" fill="#2e7bbf"/><rect x="1.2" y="2.8" width="12.6" height="9.6" fill="#c9e7fb"/><rect x="2.4" y="5.6" width="6.2" height="5.6" fill="#2a83c6"/><path d="M10.3 6.2 H12 M10.3 8.3 H12 M10.3 10.4 H12" stroke="#2a83c6" stroke-width="1"/><path d="M5.5 0.8 L7.5 2.6 L9.5 0.8" stroke="#fff" stroke-width="0.9" fill="none"/></svg>
<svg style="left:557.5px;top:421px" width="15" height="15" viewBox="0 0 15 15"><rect width="15" height="15" rx="2" fill="#2e7bbf"/><path d="M7.5 1.6 L9.3 5.4 L13.4 5.8 L10.3 8.6 L11.2 12.7 L7.5 10.6 L3.8 12.7 L4.7 8.6 L1.6 5.8 L5.7 5.4Z" fill="#fff" stroke="#fff" stroke-width="0.6" stroke-linejoin="round"/></svg>
<svg style="left:557.5px;top:442px" width="15" height="15" viewBox="0 0 15 15"><rect width="15" height="15" rx="2" fill="#2e7bbf"/><path d="M11 4.8 Q10 3.3 7.5 3.3 Q4.2 3.3 4.2 5.5 Q4.2 7.3 7.5 7.6 Q10.9 8 10.9 9.9 Q10.9 12 7.5 12 Q4.8 12 3.9 10.3 M7.5 1.8 V13.4" stroke="#fff" stroke-width="2" fill="none"/></svg>
<div class="t" style="top:480.15px;font-size:14px;line-height:14px;color:#111;font-family:'Liberation Sans',sans-serif;font-weight:bold;letter-spacing:0.3px;left:259.45px;width:90px;text-align:center;-webkit-text-stroke:0.3px #111">1 : 3</div>
<div class="t" style="top:501.30px;font-size:13px;line-height:13px;color:#a8121a;font-family:'Liberation Sans',sans-serif;font-weight:bold;letter-spacing:0.3px;left:257.45px;width:90px;text-align:center;-webkit-text-stroke:0.3px #a8121a">2H 3</div>
<svg style="left:316.6px;top:503.5px" width="5" height="4"><path d="M0 0.5 H4.5 L4.2 3.8 L2.8 2 H0.3Z" fill="#d0102e"/></svg>
<div class="t" style="top:480.50px;font-size:13px;line-height:13px;color:#13234e;font-family:'Liberation Sans',sans-serif;font-weight:bold;letter-spacing:0.15px;left:354px;-webkit-text-stroke:0.3px #13234e">Manchester City (Arcos)</div>
<div class="t" style="top:497.00px;font-size:13px;line-height:13px;color:#13234e;font-family:'Liberation Sans',sans-serif;font-weight:bold;letter-spacing:0.15px;left:354px;-webkit-text-stroke:0.3px #13234e">Real Madrid (lion)</div>
<svg style="left:538px;top:479px" width="15" height="15" viewBox="0 0 15 15"><rect width="15" height="15" rx="2" fill="#2e7bbf"/><rect x="1.2" y="2.8" width="12.6" height="9.6" fill="#c9e7fb"/><rect x="2.4" y="5.6" width="6.2" height="5.6" fill="#2a83c6"/><path d="M10.3 6.2 H12 M10.3 8.3 H12 M10.3 10.4 H12" stroke="#2a83c6" stroke-width="1"/><path d="M5.5 0.8 L7.5 2.6 L9.5 0.8" stroke="#fff" stroke-width="0.9" fill="none"/></svg>
<svg style="left:557.5px;top:479px" width="15" height="15" viewBox="0 0 15 15"><rect width="15" height="15" rx="2" fill="#2e7bbf"/><path d="M7.5 1.6 L9.3 5.4 L13.4 5.8 L10.3 8.6 L11.2 12.7 L7.5 10.6 L3.8 12.7 L4.7 8.6 L1.6 5.8 L5.7 5.4Z" fill="#fff" stroke="#fff" stroke-width="0.6" stroke-linejoin="round"/></svg>
<svg style="left:557.5px;top:500px" width="15" height="15" viewBox="0 0 15 15"><rect width="15" height="15" rx="2" fill="#2e7bbf"/><path d="M11 4.8 Q10 3.3 7.5 3.3 Q4.2 3.3 4.2 5.5 Q4.2 7.3 7.5 7.6 Q10.9 8 10.9 9.9 Q10.9 12 7.5 12 Q4.8 12 3.9 10.3 M7.5 1.8 V13.4" stroke="#fff" stroke-width="2" fill="none"/></svg>
<div class="a" style="left:259px;top:522px;width:923.5px;height:26px;background:#aecfea;border-top:1px solid #e8f0f6"></div>
<div class="t" style="top:530.00px;font-size:13px;line-height:13px;color:#111;font-family:'Liberation Sans',sans-serif;font-weight:bold;letter-spacing:0.009999999999999995px;left:282.5px;-webkit-text-stroke:0.25px #111">ESOCCER H2H GG LEAGUE - 8 MINS PLAY</div>
<svg style="left:1162px;top:527.5px;opacity:1" width="15" height="15" viewBox="0 0 16 16"><path d="M13 6.2 A5.6 5.6 0 1 0 13.2 10.5" stroke="#f2922f" stroke-width="3" fill="none"/><path d="M9.5 2.5 L15.5 1.5 L14.5 8 Z" fill="#f2922f"/></svg>
<div class="a" style="left:259px;top:548px;width:923.5px;height:75px;background:linear-gradient(#fcf9f7,#fadbd3);border-top:1px solid #e3d9d6"></div>
<div class="a" style="left:350px;top:548px;width:1px;height:75px;background:#e2d8d6"></div>
<div class="a" style="left:579.5px;top:548px;width:1px;height:75px;background:#e2d8d6"></div>
<div class="a" style="left:854px;top:548px;width:1px;height:75px;background:#e2d8d6"></div>
<div class="a" style="left:1127.5px;top:548px;width:1px;height:75px;background:#e2d8d6"></div>
<div class="a" style="left:259px;top:623px;width:923.5px;height:77px;background:linear-gradient(#fbf9f5,#fde3c2);border-top:1px solid #e3d9d6"></div>
<div class="a" style="left:350px;top:623px;width:1px;height:77px;background:#e2d8d6"></div>
<div class="a" style="left:579.5px;top:623px;width:1px;height:77px;background:#e2d8d6"></div>
<div class="a" style="left:854px;top:623px;width:1px;height:77px;background:#e2d8d6"></div>
<div class="a" style="left:1127.5px;top:623px;width:1px;height:77px;background:#e2d8d6"></div>
<div class="t" style="top:555.15px;font-size:14px;line-height:14px;color:#111;font-family:'Liberation Sans',sans-serif;font-weight:bold;letter-spacing:0.3px;left:259.45px;width:90px;text-align:center;-webkit-text-stroke:0.3px #111">0 : 3</div>
<div class="t" style="top:576.30px;font-size:13px;line-height:13px;color:#a8121a;font-family:'Liberation Sans',sans-serif;font-weight:bold;letter-spacing:0.3px;left:257.45px;width:90px;text-align:center;-webkit-text-stroke:0.3px #a8121a">2H 0</div>
<svg style="left:316.6px;top:578.5px" width="5" height="4"><path d="M0 0.5 H4.5 L4.2 3.8 L2.8 2 H0.3Z" fill="#d0102e"/></svg>
<div class="t" style="top:555.00px;font-size:13px;line-height:13px;color:#a8121a;font-family:'Liberation Sans',sans-serif;font-weight:bold;letter-spacing:0.15px;left:354px;-webkit-text-stroke:0.3px #a8121a">Bayern Munchen</div>
<div class="t" style="top:571.50px;font-size:13px;line-height:13px;color:#a8121a;font-family:'Liberation Sans',sans-serif;font-weight:bold;letter-spacing:0.15px;left:354px;-webkit-text-stroke:0.3px #a8121a">(HAZARD) Esports</div>
<div class="t" style="top:588.00px;font-size:13px;line-height:13px;color:#13234e;font-family:'Liberation Sans',sans-serif;font-weight:bold;letter-spacing:0.15px;left:354px;-webkit-text-stroke:0.3px #13234e">Paris Saint Germain</div>
<div class="t" style="top:604.50px;font-size:13px;line-height:13px;color:#13234e;font-family:'Liberation Sans',sans-serif;font-weight:bold;letter-spacing:0.15px;left:354px;-webkit-text-stroke:0.3px #13234e">(ACID) Esports</div>
<svg style="left:557.5px;top:554px" width="15" height="15" viewBox="0 0 15 15"><rect width="15" height="15" rx="2" fill="#2e7bbf"/><path d="M7.5 1.6 L9.3 5.4 L13.4 5.8 L10.3 8.6 L11.2 12.7 L7.5 10.6 L3.8 12.7 L4.7 8.6 L1.6 5.8 L5.7 5.4Z" fill="#fff" stroke="#fff" stroke-width="0.6" stroke-linejoin="round"/></svg>
<svg style="left:557.5px;top:575.5px" width="15" height="15" viewBox="0 0 15 15"><rect width="15" height="15" rx="2" fill="#2e7bbf"/><path d="M11 4.8 Q10 3.3 7.5 3.3 Q4.2 3.3 4.2 5.5 Q4.2 7.3 7.5 7.6 Q10.9 8 10.9 9.9 Q10.9 12 7.5 12 Q4.8 12 3.9 10.3 M7.5 1.8 V13.4" stroke="#fff" stroke-width="2" fill="none"/></svg>
<div class="t" style="top:552.16px;font-size:14.5px;line-height:14.5px;color:#4a4a4a;font-family:'Liberation Serif',serif;font-weight:bold;letter-spacing:0.45px;left:582.2px;">0.5</div>
<div class="t" style="top:553.33px;font-size:13.2px;line-height:13.2px;color:#a8121a;font-family:'Liberation Sans',sans-serif;font-weight:bold;letter-spacing:0.8px;right:520.7px;text-align:right;-webkit-text-stroke:0.35px #a8121a">-0.95</div>
<div class="t" style="top:572.83px;font-size:13.2px;line-height:13.2px;color:#111;font-family:'Liberation Sans',sans-serif;font-weight:bold;letter-spacing:0.8px;right:520.7px;text-align:right;-webkit-text-stroke:0.35px #111">0.65</div>
<div class="t" style="top:552.16px;font-size:14.5px;line-height:14.5px;color:#4a4a4a;font-family:'Liberation Serif',serif;font-weight:bold;letter-spacing:0.45px;left:684.2px;">5.5</div>
<div class="t" style="top:552.77px;font-size:14px;line-height:14px;color:#999;font-family:'Liberation Serif',serif;font-weight:bold;left:734px;">o</div>
<div class="t" style="top:572.27px;font-size:14px;line-height:14px;color:#999;font-family:'Liberation Serif',serif;font-weight:bold;left:734px;">u</div>
<div class="t" style="top:553.33px;font-size:13.2px;line-height:13.2px;color:#111;font-family:'Liberation Sans',sans-serif;font-weight:bold;letter-spacing:0.8px;right:402.20000000000005px;text-align:right;-webkit-text-stroke:0.35px #111">0.95</div>
<div class="t" style="top:572.83px;font-size:13.2px;line-height:13.2px;color:#111;font-family:'Liberation Sans',sans-serif;font-weight:bold;letter-spacing:0.8px;right:402.20000000000005px;text-align:right;-webkit-text-stroke:0.35px #111">0.65</div>
<div class="a" style="left:259px;top:624px;width:91px;height:71px;background:#f86c6c"></div>
<div class="t" style="top:630.15px;font-size:14px;line-height:14px;color:#111;font-family:'Liberation Sans',sans-serif;font-weight:bold;letter-spacing:0.3px;left:259.45px;width:90px;text-align:center;-webkit-text-stroke:0.3px #111">3 : 0</div>
<div class="t" style="top:651.30px;font-size:13px;line-height:13px;color:#a8121a;font-family:'Liberation Sans',sans-serif;font-weight:bold;letter-spacing:0.3px;left:257.45px;width:90px;text-align:center;-webkit-text-stroke:0.3px #a8121a">2H 0</div>
<svg style="left:316.6px;top:653.5px" width="5" height="4"><path d="M0 0.5 H4.5 L4.2 3.8 L2.8 2 H0.3Z" fill="#d0102e"/></svg>
<div class="t" style="top:629.00px;font-size:13px;line-height:13px;color:#13234e;font-family:'Liberation Sans',sans-serif;font-weight:bold;letter-spacing:0.15px;left:354px;-webkit-text-stroke:0.3px #13234e">Spain (RADICAL)</div>
<div class="t" style="top:645.50px;font-size:13px;line-height:13px;color:#13234e;font-family:'Liberation Sans',sans-serif;font-weight:bold;letter-spacing:0.15px;left:354px;-webkit-text-stroke:0.3px #13234e">Esports</div>
<div class="t" style="top:662.00px;font-size:13px;line-height:13px;color:#a8121a;font-family:'Liberation Sans',sans-serif;font-weight:bold;letter-spacing:0.15px;left:354px;-webkit-text-stroke:0.3px #a8121a">Portugal (MADNESS)</div>
<div class="t" style="top:678.50px;font-size:13px;line-height:13px;color:#a8121a;font-family:'Liberation Sans',sans-serif;font-weight:bold;letter-spacing:0.15px;left:354px;-webkit-text-stroke:0.3px #a8121a">Esports</div>
<svg style="left:557.5px;top:629px" width="15" height="15" viewBox="0 0 15 15"><rect width="15" height="15" rx="2" fill="#2e7bbf"/><path d="M7.5 1.6 L9.3 5.4 L13.4 5.8 L10.3 8.6 L11.2 12.7 L7.5 10.6 L3.8 12.7 L4.7 8.6 L1.6 5.8 L5.7 5.4Z" fill="#fff" stroke="#fff" stroke-width="0.6" stroke-linejoin="round"/></svg>
<svg style="left:557.5px;top:650.5px" width="15" height="15" viewBox="0 0 15 15"><rect width="15" height="15" rx="2" fill="#2e7bbf"/><path d="M11 4.8 Q10 3.3 7.5 3.3 Q4.2 3.3 4.2 5.5 Q4.2 7.3 7.5 7.6 Q10.9 8 10.9 9.9 Q10.9 12 7.5 12 Q4.8 12 3.9 10.3 M7.5 1.8 V13.4" stroke="#fff" stroke-width="2" fill="none"/></svg>
<div class="t" style="top:626.66px;font-size:14.5px;line-height:14.5px;color:#4a4a4a;font-family:'Liberation Serif',serif;font-weight:bold;letter-spacing:0.45px;left:684.2px;">5</div>
<div class="t" style="top:645.66px;font-size:14.5px;line-height:14.5px;color:#4a4a4a;font-family:'Liberation Serif',serif;font-weight:bold;letter-spacing:0.45px;left:582.2px;">0/0.5</div>
</body></html>
